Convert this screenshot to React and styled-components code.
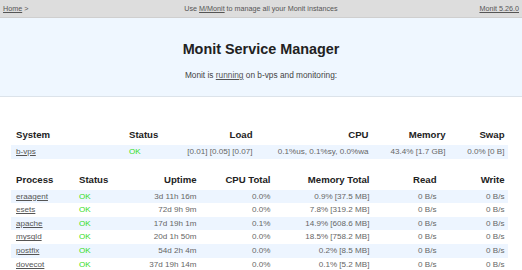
import styled, { createGlobalStyle } from 'styled-components';

const GlobalStyle = createGlobalStyle`
  html, body {
    margin: 0;
    padding: 0;
    background: #ffffff;
    font-family: "Liberation Sans", Arial, sans-serif;
  }
`;

const systemCols = [
  { label: 'System', width: 113, align: 'left' },
  { label: 'Status', width: 56, align: 'left' },
  { label: 'Load', width: 76, align: 'right' },
  { label: 'CPU', width: 116, align: 'right' },
  { label: 'Memory', width: 77, align: 'right' },
  { label: 'Swap', width: 59, align: 'right' },
];

const processCols = [
  { label: 'Process', width: 63, align: 'left' },
  { label: 'Status', width: 56, align: 'left' },
  { label: 'Uptime', width: 70, align: 'right' },
  { label: 'CPU Total', width: 74, align: 'right' },
  { label: 'Memory Total', width: 99, align: 'right' },
  { label: 'Read', width: 67, align: 'right' },
  { label: 'Write', width: 68, align: 'right' },
];

const processes = [
  ['eraagent', '3d 11h 16m', '0.0%', '0.9% [37.5 MB]'],
  ['esets', '72d 9h 9m', '0.0%', '7.8% [319.2 MB]'],
  ['apache', '17d 19h 1m', '0.1%', '14.9% [608.6 MB]'],
  ['mysqld', '20d 1h 50m', '0.0%', '18.5% [758.2 MB]'],
  ['postfix', '54d 2h 4m', '0.0%', '0.2% [8.5 MB]'],
  ['dovecot', '37d 19h 14m', '0.0%', '0.1% [5.2 MB]'],
];

export default function App() {
  return (
    <>
      <GlobalStyle />
      <TopBar>
        <Crumbs>
          <NavLink href="#">Home</NavLink> &gt;
        </Crumbs>
        <Notice>
          Use <NavLink href="#">M/Monit</NavLink> to manage all your Monit instances
        </Notice>
        <Version>
          <NavLink href="#">Monit 5.26.0</NavLink>
        </Version>
      </TopBar>
      <Header>
        <Title>Monit Service Manager</Title>
        <Subtitle>
          Monit is <NavLink href="#">running</NavLink> on b-vps and monitoring:
        </Subtitle>
      </Header>
      <Content>
        <Table $first>
          <colgroup>
            {systemCols.map((c) => (
              <col key={c.label} style={{ width: c.width }} />
            ))}
          </colgroup>
          <thead>
            <tr>
              {systemCols.map((c) => (
                <Th key={c.label} $align={c.align}>{c.label}</Th>
              ))}
            </tr>
          </thead>
          <tbody>
            <Row $stripe>
              <Td><CellLink href="#">b-vps</CellLink></Td>
              <Td><Ok>OK</Ok></Td>
              <Td $align="right">[0.01]&nbsp;[0.05]&nbsp;[0.07]</Td>
              <Td $align="right">0.1%us,&nbsp;0.1%sy,&nbsp;0.0%wa</Td>
              <Td $align="right">43.4% [1.7 GB]</Td>
              <Td $align="right">0.0% [0 B]</Td>
            </Row>
          </tbody>
        </Table>
        <Table>
          <colgroup>
            {processCols.map((c) => (
              <col key={c.label} style={{ width: c.width }} />
            ))}
          </colgroup>
          <thead>
            <tr>
              {processCols.map((c) => (
                <Th key={c.label} $align={c.align}>{c.label}</Th>
              ))}
            </tr>
          </thead>
          <tbody>
            {processes.map(([name, uptime, cpu, mem], i) => (
              <Row key={name} $stripe={i % 2 === 0}>
                <Td><CellLink href="#">{name}</CellLink></Td>
                <Td><Ok>OK</Ok></Td>
                <Td $align="right">{uptime}</Td>
                <Td $align="right">{cpu}</Td>
                <Td $align="right">{mem}</Td>
                <Td $align="right">0 B/s</Td>
                <Td $align="right">0 B/s</Td>
              </Row>
            ))}
          </tbody>
        </Table>
      </Content>
    </>
  );
}

const TopBar = styled.div`
  display: grid;
  grid-template-columns: 1fr auto 1fr;
  align-items: center;
  height: 17px;
  padding: 0 3px;
  background: #dddddd;
  border-bottom: 1px solid #cfcfcf;
  font-size: 7.2px;
  color: #555555;
`;

const Crumbs = styled.div`
  justify-self: start;
`;

const Notice = styled.div`
  justify-self: center;
`;

const Version = styled.div`
  justify-self: end;
`;

const NavLink = styled.a`
  color: #555555;
  text-decoration: underline;
`;

const Header = styled.div`
  height: 79px;
  box-sizing: border-box;
  padding-top: 22px;
  background: #eff7ff;
  border-bottom: 1px solid #dce3ea;
  text-align: center;
`;

const Title = styled.h1`
  margin: 0;
  font-size: 14.4px;
  font-weight: bold;
  color: #222222;
  line-height: 18px;
`;

const Subtitle = styled.p`
  margin: 12px 0 0;
  font-size: 8.3px;
  line-height: 10px;
  color: #444444;
`;

const Content = styled.div`
  padding: 27px 0 0 11px;
`;

const Table = styled.table`
  table-layout: fixed;
  width: 497px;
  border-collapse: collapse;
  margin-top: ${(p) => (p.$first ? '0' : '10px')};
`;

const Th = styled.th`
  height: 21px;
  padding: 0 3.5px 0 5px;
  text-align: ${(p) => p.$align || 'left'};
  font-size: 9.6px;
  font-weight: bold;
  color: #222222;
  vertical-align: middle;
  white-space: nowrap;
`;

const Row = styled.tr`
  background: ${(p) => (p.$stripe ? '#edf5ff' : 'transparent')};
`;

const Td = styled.td`
  height: 13.6px;
  padding: 0 3.5px 0 5px;
  line-height: 13.6px;
  text-align: ${(p) => p.$align || 'left'};
  font-size: 8.1px;
  color: #666666;
  white-space: nowrap;
`;

const CellLink = styled.a`
  color: #555555;
  text-decoration: underline;
`;

const Ok = styled.span`
  color: #33dd22;
`;
